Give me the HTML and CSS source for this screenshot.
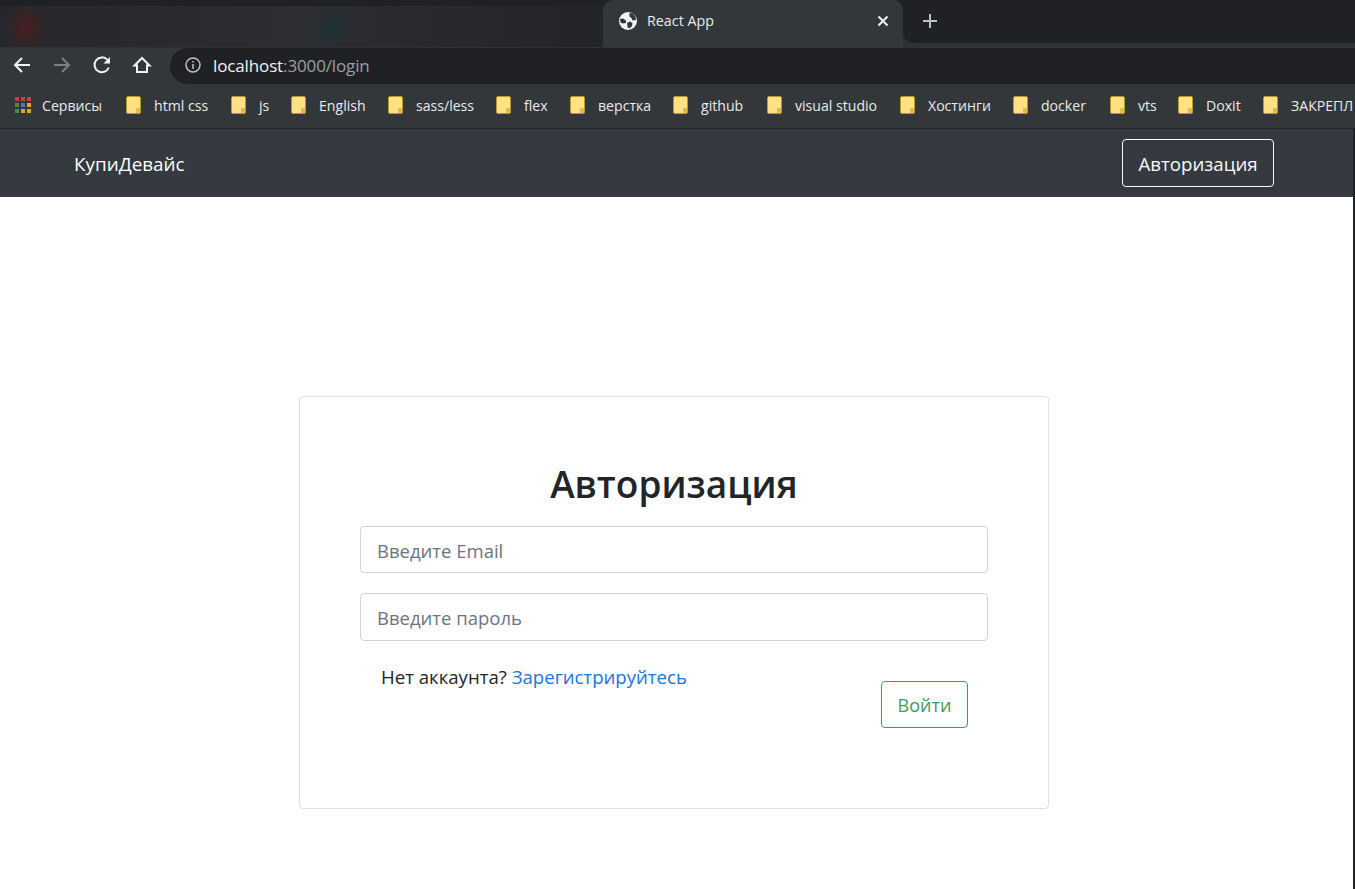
FILE: index.html
```html
<!DOCTYPE html>
<html>
<head>
    <title>React App</title>
    <link rel="stylesheet" href="styles.css">
</head>
<body>
    <!-- Browser chrome -->
    <div class="tabstrip">
        <div class="blurred-tabs"></div>
        <div class="tab">
            <svg class="globe" width="18" height="18" viewBox="0 0 18 18">
                <circle cx="9" cy="9" r="9" fill="#f1f3f4"/>
                <path d="M10.5 1 L14 1.5 L16.5 5 L17 8 L13.5 8.5 L12.5 6 L10.5 4.5 Z" fill="#34373a"/>
                <path d="M1 7 L4 6.5 L7 8.5 L7 11 L4 11.5 L1.5 10.5 Z" fill="#34373a"/>
                <path d="M8 11 L11 9.5 L13.5 11 L13 14 L10.5 16.5 L8.5 15 Z" fill="#34373a"/>
            </svg>
            <span class="tab-title">React App</span>
            <svg class="tab-close" width="12" height="12" viewBox="0 0 12 12">
                <path d="M1.5 1.5 L10.5 10.5 M10.5 1.5 L1.5 10.5" stroke="#f1f3f4" stroke-width="2"/>
            </svg>
        </div>
        <div class="strip-rest">
            <svg class="new-tab" width="16" height="16" viewBox="0 0 16 16">
                <path d="M8 1 V15 M1 8 H15" stroke="#bdc1c6" stroke-width="2"/>
            </svg>
        </div>
    </div>

    <div class="toolbar">
        <div class="toolbar-buttons">
            <svg width="20" height="20" viewBox="0 0 20 20">
                <path d="M18 10 H3 M10 3 L3 10 L10 17" fill="none" stroke="#f1f3f4" stroke-width="2"/>
            </svg>
            <svg width="20" height="20" viewBox="0 0 20 20">
                <path d="M2 10 H17 M10 3 L17 10 L10 17" fill="none" stroke="#7d7f82" stroke-width="2"/>
            </svg>
            <svg width="20" height="20" viewBox="0 0 20 20">
                <path d="M16.8 12.5 A7.4 7.4 0 1 1 15.4 4.8" fill="none" stroke="#f1f3f4" stroke-width="2"/>
                <path d="M18 2 V8.5 H11.5 Z" fill="#f1f3f4"/>
            </svg>
            <svg width="20" height="20" viewBox="0 0 20 20">
                <path d="M10 3 L2.5 10.5 H5 V17 H15 V10.5 H17.5 Z" fill="none" stroke="#f1f3f4" stroke-width="2"/>
            </svg>
        </div>
        <div class="omnibox">
            <svg width="16" height="16" viewBox="0 0 16 16">
                <circle cx="8" cy="8" r="7" fill="none" stroke="#bdc1c6" stroke-width="1.5"/>
                <path d="M8 7 V12 M8 4 V5.6" stroke="#bdc1c6" stroke-width="1.5"/>
            </svg>
            <span class="url"><span class="url-host">localhost</span>:3000/login</span>
        </div>
    </div>

    <div class="bookmarks">
        <div class="bookmark">
            <svg class="apps" width="16" height="16" viewBox="0 0 16 16">
                <rect x="0" y="0" width="4" height="4" fill="#c5413a"/>
                <rect x="6" y="0" width="4" height="4" fill="#c5413a"/>
                <rect x="12" y="0" width="4" height="4" fill="#c5413a"/>
                <rect x="0" y="6" width="4" height="4" fill="#3f8f4f"/>
                <rect x="6" y="6" width="4" height="4" fill="#3b78d8"/>
                <rect x="12" y="6" width="4" height="4" fill="#e0a526"/>
                <rect x="0" y="12" width="4" height="4" fill="#3f8f4f"/>
                <rect x="6" y="12" width="4" height="4" fill="#e0a526"/>
                <rect x="12" y="12" width="4" height="4" fill="#e0a526"/>
            </svg>
            Сервисы
        </div>
        <div class="bookmark"><i class="folder"></i>html css</div>
        <div class="bookmark"><i class="folder"></i>js</div>
        <div class="bookmark"><i class="folder"></i>English</div>
        <div class="bookmark"><i class="folder"></i>sass/less</div>
        <div class="bookmark"><i class="folder"></i>flex</div>
        <div class="bookmark"><i class="folder"></i>верстка</div>
        <div class="bookmark"><i class="folder"></i>github</div>
        <div class="bookmark"><i class="folder"></i>visual studio</div>
        <div class="bookmark"><i class="folder"></i>Хостинги</div>
        <div class="bookmark"><i class="folder"></i>docker</div>
        <div class="bookmark"><i class="folder"></i>vts</div>
        <div class="bookmark"><i class="folder"></i>Doxit</div>
        <div class="bookmark"><i class="folder"></i>ЗАКРЕПЛ</div>
    </div>

    <!-- Page -->
    <div class="page">
        <nav class="navbar">
            <a class="brand" href="#">КупиДевайс</a>
            <button class="nav-button">Авторизация</button>
        </nav>

        <main class="content">
            <div class="card">
                <h2 class="card-title">Авторизация</h2>
                <form class="login-form">
                    <input class="field" type="text" placeholder="Введите Email">
                    <input class="field field-password" type="password" placeholder="Введите пароль">
                    <div class="form-footer">
                        <div class="register-note">Нет аккаунта? <a href="#">Зарегистрируйтесь</a></div>
                        <button class="login-button" type="button">Войти</button>
                    </div>
                </form>
            </div>
        </main>
    </div>
</body>
</html>
```

FILE: styles.css
```css
* {
    box-sizing: border-box;
}

html, body {
    height: 100%;
}

body {
    margin: 0;
    overflow: hidden;
    font-family: "Open Sans", "Noto Sans", Arial, sans-serif;
    background-color: #fff;
    display: flex;
    flex-direction: column;
}

/* Browser chrome */
.tabstrip {
    height: 48px;
    flex: none;
    display: flex;
    background-image: linear-gradient(#202124 30px, #2f3235 30px);
}

.blurred-tabs {
    width: 603px;
    height: 41px;
    margin-top: 6px;
    background-color: #27282b;
    background-image:
        radial-gradient(ellipse 22px 24px at 26px 22px, #4a1f22, transparent),
        radial-gradient(ellipse 20px 22px at 333px 22px, #1d3338, transparent),
        linear-gradient(90deg, #26272a, #2d2e31 50%, #232427);
}

.tab {
    width: 300px;
    height: 48px;
    display: flex;
    align-items: center;
    padding: 0 14px 7px 16px;
    background-color: #34373a;
    border-radius: 10px 10px 0 0;
    color: #e8eaed;
    font-size: 14.3px;
}

.tab-title {
    flex: 1;
    margin-left: 10px;
}

.strip-rest {
    flex: 1;
    height: 43px;
    padding: 13px 0 0 19px;
    background-color: #202124;
    border-bottom-left-radius: 10px;
}

.new-tab {
    display: block;
}

.toolbar {
    height: 36px;
    flex: none;
    display: flex;
    background-color: #34373a;
}

.toolbar-buttons {
    width: 170px;
    padding: 7px 0 0 12px;
    display: flex;
    gap: 20px;
    flex: none;
}

.omnibox {
    flex: 1;
    display: flex;
    align-items: center;
    gap: 12px;
    padding: 0 0 2px 15px;
    background-color: #202124;
    border-radius: 18px 0 0 18px;
}

.url {
    font-size: 17px;
    color: #9aa0a6;
    letter-spacing: -0.13px;
}

.url-host {
    color: #f1f3f4;
}

.bookmarks {
    height: 45px;
    flex: none;
    display: grid;
    grid-template-columns: 126px 105px 60px 97px 108px 74px 103px 94px 133px 113px 97px 68px 85px 1fr;
    align-items: center;
    padding-bottom: 2px;
    background-color: #34373a;
    border-bottom: 1px solid #24252a;
    color: #e8eaed;
    font-size: 14.1px;
    white-space: nowrap;
    overflow: hidden;
}

.bookmark {
    display: flex;
    align-items: center;
}

.apps {
    margin: 0 11px 0 15px;
}

.folder {
    position: relative;
    width: 15px;
    height: 18px;
    margin-right: 13px;
    flex: none;
    background-color: #ffe082;
    border: 1px solid #b8992f;
    border-radius: 2px;
}

.folder::after {
    content: "";
    position: absolute;
    right: 0;
    bottom: 0;
    width: 4px;
    height: 5px;
    background-color: #e3b948;
}

/* Page */
.page {
    flex: 1;
    display: flex;
    flex-direction: column;
    border-right: 2px solid #202124;
}

.navbar {
    height: 68px;
    flex: none;
    display: flex;
    justify-content: space-between;
    align-items: center;
    padding: 0 79px 0 74px;
    background-color: #343a40;
}

.brand {
    padding-top: 1px;
    color: #fff;
    font-size: 18.9px;
    text-decoration: none;
}

.nav-button {
    width: 152px;
    height: 48px;
    padding: 1px 0 0;
    background: transparent;
    border: 1px solid #f8f9fa;
    border-radius: 4px;
    color: #f8f9fa;
    font-family: inherit;
    font-size: 18.7px;
}

.content {
    display: flex;
    justify-content: center;
    padding: 199px 5px 0 0;
}

.card {
    width: 750px;
    height: 413px;
    padding: 60px 60px 0;
    background-color: #fff;
    border: 1px solid #dfdfdf;
    border-radius: 4px;
    color: #212529;
}

.card-title {
    margin: 0;
    height: 69px;
    text-align: center;
    font-size: 37px;
    font-weight: 600;
    line-height: 53px;
}

.login-form {
    display: flex;
    flex-direction: column;
}

.field {
    height: 47px;
    width: 100%;
    padding: 2px 16px 0;
    border: 1px solid #ced4da;
    border-radius: 4px;
    font-family: inherit;
    font-size: 18.5px;
    color: #495057;
}

.field::placeholder {
    color: #6c757d;
    opacity: 1;
}

.field-password {
    height: 48px;
    margin-top: 20px;
    padding-top: 0;
}

.form-footer {
    display: flex;
    justify-content: space-between;
    padding: 22px 20px 0 21px;
}

.register-note {
    font-size: 18.6px;
    line-height: 27px;
}

.register-note a {
    color: #2273dc;
    text-decoration: none;
}

.login-button {
    width: 87px;
    height: 47px;
    margin-top: 18px;
    background: #fff;
    border: 1px solid #3f9b5a;
    border-radius: 4px;
    color: #3f9b5a;
    font-family: inherit;
    font-size: 18px;
}
```
